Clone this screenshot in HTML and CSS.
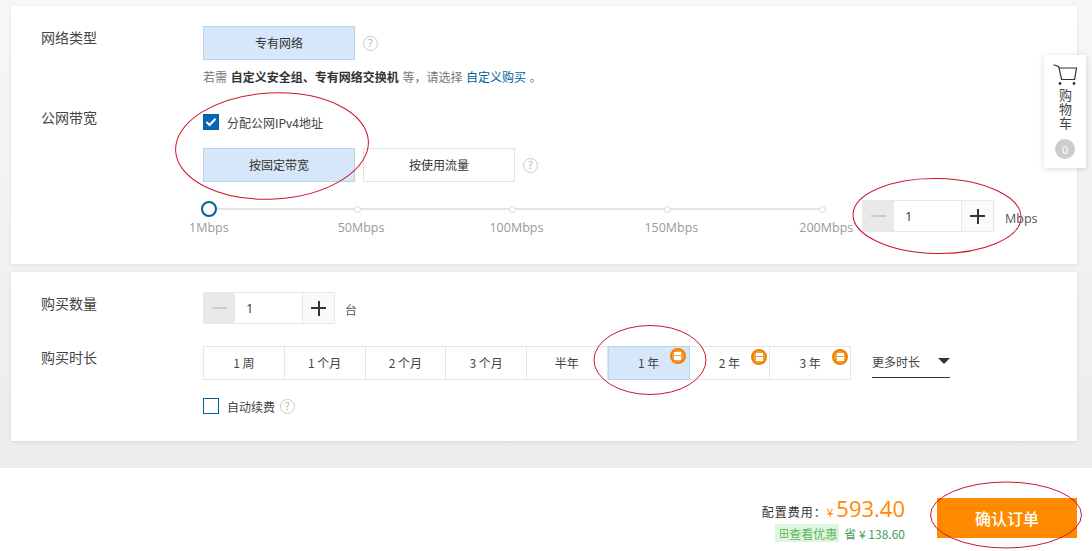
FILE: index.html
```html
<!DOCTYPE html>
<html lang="zh-CN">
<head>
    <meta charset="UTF-8">
    <meta name="viewport" content="width=device-width, initial-scale=1.0">
    <title>确认订单</title>
    <link rel="stylesheet" href="styles.css">
</head>
<body>
    <div class="page">
        <main class="content">
            <section class="panel panel-network">
                <div class="row">
                    <div class="row-label">网络类型</div>
                    <div class="row-body">
                        <div class="inline">
                            <button class="option option-active">专有网络</button>
                            <span class="help">?</span>
                        </div>
                        <p class="hint">若需 <b>自定义安全组、专有网络交换机</b> 等，请选择 <a href="#">自定义购买</a> 。</p>
                    </div>
                </div>

                <div class="row row-bandwidth">
                    <div class="row-label">公网带宽</div>
                    <div class="row-body">
                        <label class="check check-ipv4">
                            <span class="box box-on">
                                <svg width="12" height="10" viewBox="0 0 12 10"><path d="M1.5 5 L4.6 8 L10.5 1.8" fill="none" stroke="#fff" stroke-width="2"/></svg>
                            </span>
                            分配公网IPv4地址
                        </label>
                        <div class="inline billing">
                            <button class="option option-active">按固定带宽</button>
                            <button class="option">按使用流量</button>
                            <span class="help">?</span>
                        </div>
                        <div class="bandwidth">
                            <div class="slider">
                                <div class="track">
                                    <span class="knob"></span>
                                    <span class="node node-50"></span>
                                    <span class="node node-rest"></span>
                                    <span class="node node-rest"></span>
                                    <span class="node node-rest"></span>
                                </div>
                                <div class="scale">
                                    <span>1Mbps</span>
                                    <span>50Mbps</span>
                                    <span>100Mbps</span>
                                    <span>150Mbps</span>
                                    <span>200Mbps</span>
                                </div>
                            </div>
                            <div class="stepper">
                                <span class="step step-off"><i class="minus"></i></span>
                                <span class="step-value">1</span>
                                <span class="step"><i class="plus"></i></span>
                            </div>
                            <span class="unit unit-mbps">Mbps</span>
                        </div>
                    </div>
                </div>
            </section>

            <section class="panel panel-buy">
                <div class="row">
                    <div class="row-label">购买数量</div>
                    <div class="row-body inline">
                        <div class="stepper">
                            <span class="step step-off"><i class="minus"></i></span>
                            <span class="step-value">1</span>
                            <span class="step"><i class="plus"></i></span>
                        </div>
                        <span class="unit unit-tai">台</span>
                    </div>
                </div>

                <div class="row row-period">
                    <div class="row-label">购买时长</div>
                    <div class="row-body">
                        <div class="inline">
                            <div class="periods">
                                <span class="period">1 周</span>
                                <span class="period">1 个月</span>
                                <span class="period">2 个月</span>
                                <span class="period">3 个月</span>
                                <span class="period">半年</span>
                                <span class="period period-active">1 年<i class="deal"></i></span>
                                <span class="period">2 年<i class="deal"></i></span>
                                <span class="period">3 年<i class="deal"></i></span>
                            </div>
                            <div class="more">更多时长<i class="caret"></i></div>
                        </div>
                        <label class="check check-renew">
                            <span class="box"></span>
                            自动续费
                            <span class="help">?</span>
                        </label>
                    </div>
                </div>
            </section>
        </main>

        <footer class="footer">
            <div class="cost">
                <div class="cost-line"><span class="cost-label">配置费用：</span><span class="yen">¥</span><span class="price">593.40</span></div>
                <div class="save-line">
                    <span class="deal-tag">
                        <svg width="10" height="11" viewBox="0 0 10 11"><path d="M1.5 1.5 H8.5 V9.5 H1.5 Z M1.5 5.5 H8.5 M5 1.5 V9.5" fill="none" stroke="#6cc06c"/></svg>查看优惠
                    </span>
                    <span class="save">省 ¥ 138.60</span>
                </div>
            </div>
            <button class="confirm">确认订单</button>
        </footer>

        <aside class="cart">
            <svg class="cart-icon" width="25" height="22" viewBox="0 0 25 22">
                <path d="M0.5 0.8 L5.6 2.4 L8.6 15.5 H21.6 L23.5 4 H6" fill="none" stroke="#333" stroke-width="1.2"/>
                <circle cx="7" cy="19.5" r="1.4" fill="#333"/>
                <circle cx="21" cy="19.5" r="1.4" fill="#333"/>
            </svg>
            <span class="cart-text">购物车</span>
            <span class="cart-count">0</span>
        </aside>

        <!-- red hand-drawn marks on top of the screenshot -->
        <svg class="marks" width="1092" height="551" viewBox="0 0 1092 551">
            <ellipse cx="272" cy="146" rx="96.5" ry="53" transform="rotate(-3 272 146)"/>
            <ellipse cx="937" cy="216" rx="84" ry="37.5" transform="rotate(1 937 216)"/>
            <ellipse cx="650" cy="360" rx="56" ry="34.5"/>
            <ellipse cx="1006" cy="515" rx="75.5" ry="33"/>
        </svg>
    </div>
</body>
</html>
```

FILE: styles.css
```css
* {
    box-sizing: border-box;
}

body {
    margin: 0;
    background-color: #f5f5f5;
    color: #333;
    font-family: "Noto Sans CJK SC", "Open Sans", sans-serif;
    font-size: 12px;
}

.page {
    position: relative;
    width: 1092px;
    height: 551px;
    overflow: hidden;
}

.content {
    height: 468px;
    padding: 6px 15px 0 11px;
    background: linear-gradient(#f7f7f7, #ececec);
}

.panel {
    background-color: #fff;
    padding: 20px 0 0 30px;
    box-shadow: 0 1px 4px rgba(0, 0, 0, 0.08);
}

.panel-network {
    height: 258px;
}

.panel-buy {
    height: 169px;
    margin-top: 8px;
}

.row {
    display: grid;
    grid-template-columns: 162px 1fr;
}

.row-label {
    font-size: 14px;
    line-height: 22px;
    color: #444;
}

.row-bandwidth {
    margin-top: 20px;
}

.row-period {
    margin-top: 22px;
}

.inline {
    display: flex;
    align-items: center;
}

/* buttons */
.option {
    width: 152px;
    height: 34px;
    padding: 0 0 2px;
    border: 1px solid #e3e3e3;
    background-color: #fff;
    color: #333;
    font: inherit;
}

.option + .option {
    margin-left: 8px;
}

.option-active {
    background-color: #d5e7f8;
    border-color: #b9d3e8;
}

.help {
    display: inline-block;
    width: 15px;
    height: 15px;
    margin-left: 8px;
    border: 1px solid #ccc;
    border-radius: 50%;
    color: #aaa;
    font-family: "Open Sans", sans-serif;
    font-size: 10px;
    line-height: 13px;
    text-align: center;
}

.hint {
    margin: 8px 0 0;
    line-height: 18px;
    color: #777;
    word-spacing: 1px;
}

.hint b {
    color: #333;
}

.hint a {
    color: #00609e;
    text-decoration: none;
}

/* checkboxes */
.check {
    display: flex;
    align-items: center;
    color: #444;
}

.box {
    display: flex;
    align-items: center;
    justify-content: center;
    width: 16px;
    height: 16px;
    margin-right: 8px;
    border: 1px solid #00609e;
}

.box-on {
    background-color: #0a66b7;
}

.check-ipv4 {
    height: 24px;
    margin-top: 4px;
}

.check-renew {
    height: 16px;
    margin-top: 18px;
}

.check-renew .help {
    margin-left: 5px;
}

.billing {
    margin-top: 14px;
}

/* slider */
.bandwidth {
    display: flex;
    align-items: flex-start;
    margin: 18px 0 0 -14px;
}

.slider {
    width: 665px;
}

.track {
    display: flex;
    align-items: center;
    width: 625px;
    height: 18px;
    margin-left: 12px;
    background: linear-gradient(#e4e4e4, #e4e4e4) no-repeat left center / 100% 2px;
}

.knob {
    width: 16px;
    height: 16px;
    border: 2px solid #00609e;
    border-radius: 50%;
    background-color: #fff;
}

.node {
    width: 7px;
    height: 7px;
    border: 1px solid #d8d8d8;
    border-radius: 50%;
    background-color: #fff;
}

.node-50 {
    margin-left: 137px;
}

.node-rest {
    margin-left: 148px;
}

.scale {
    display: flex;
    margin-top: 1px;
    color: #999;
    font-family: "Open Sans", sans-serif;
    font-size: 12.5px;
    line-height: 18px;
}

.scale span + span {
    margin-left: 109px;
}

.scale span:nth-child(3) {
    margin-left: 105px;
}

.scale span:nth-child(n+4) {
    margin-left: 101px;
}

/* stepper */
.stepper {
    display: flex;
    width: 132px;
    height: 32px;
    margin-left: 8px;
    border: 1px solid #e8e8e8;
}

.row-body > .stepper {
    margin-left: 0;
}

.step {
    position: relative;
    width: 31px;
    background-color: #fafafa;
}

.step-off {
    background-color: #e9e9e9;
}

.step-value {
    flex: 1;
    padding-left: 11px;
    border-right: 1px solid #e8e8e8;
    font-family: "Open Sans", sans-serif;
    font-size: 13px;
    line-height: 30px;
}

.minus,
.plus {
    position: absolute;
    top: 14px;
    left: 8px;
    width: 15px;
    height: 2px;
    background-color: #ccc;
}

.plus {
    background-color: #333;
}

.plus::after {
    content: "";
    position: absolute;
    top: -6.5px;
    left: 6.5px;
    width: 2px;
    height: 15px;
    background-color: #333;
}

.unit-mbps {
    margin: 10px 0 0 11px;
    color: #555;
    font-family: "Open Sans", sans-serif;
    font-size: 12.5px;
    line-height: 18px;
}

.unit-tai {
    margin: 2px 0 0 10px;
    color: #555;
}

/* period picker */
.periods {
    display: flex;
    border: 1px solid #e5e5e5;
    width: 648px;
    height: 34px;
}

.period {
    position: relative;
    flex: 1;
    border-right: 1px solid #e5e5e5;
    line-height: 32px;
    text-align: center;
    color: #444;
}

.period:last-child {
    border-right: 0;
}

.period-active {
    margin: -1px 0;
    height: 34px;
    background-color: #d5e7f8;
    border: 1px solid #b9d3e8;
}

.deal {
    position: absolute;
    top: 2px;
    right: 2px;
    display: flex;
    align-items: center;
    justify-content: center;
    width: 16px;
    height: 16px;
    border: 2px solid #ee8200;
    border-radius: 50%;
    background-color: #f7a13a;
}

.deal::after {
    content: "";
    width: 7px;
    height: 8px;
    background: linear-gradient(#fff 0 3px, #f7a13a 3px 4px, #fff 4px);
}

.period-active .deal {
    top: 1px;
    right: 3px;
}

.more {
    display: flex;
    align-items: center;
    justify-content: space-between;
    width: 78px;
    height: 30px;
    margin-left: 21px;
    padding-bottom: 3px;
    border-bottom: 1px solid #333;
    color: #444;
}

.caret {
    width: 0;
    height: 0;
    border-style: solid;
    border-width: 6px 6px 0;
    border-color: #333 transparent transparent;
}

/* footer */
.footer {
    display: flex;
    justify-content: flex-end;
    height: 83px;
    padding: 30px 15px 0 0;
    background-color: #fff;
}

.cost {
    margin-top: -5px;
    text-align: right;
}

.cost-line {
    height: 31px;
    line-height: 30px;
}

.cost-label {
    letter-spacing: 1px;
}

.yen {
    margin-right: 3px;
    color: #ff8a00;
}

.price {
    color: #ff8a00;
    font-family: "Open Sans", sans-serif;
    font-size: 22px;
}

.save-line {
    display: flex;
    align-items: center;
    justify-content: flex-end;
    height: 18px;
}

.deal-tag {
    display: flex;
    align-items: center;
    height: 18px;
    padding: 0 2px 0 4px;
    background-color: #e0f5e0;
    color: #5cb85c;
}

.save {
    margin-left: 5px;
    color: #3f9e5a;
}

.confirm {
    width: 140px;
    height: 40px;
    margin-left: 32px;
    border: 0;
    background-color: #ff8a00;
    color: #fff;
    font: inherit;
    font-size: 16px;
    font-weight: 500;
}

/* floating cart */
.cart {
    position: absolute;
    top: 55px;
    left: 1044px;
    display: flex;
    flex-direction: column;
    align-items: center;
    width: 42px;
    height: 113px;
    padding-top: 9px;
    background-color: #fff;
    box-shadow: 0 1px 6px rgba(0, 0, 0, 0.15);
}

.cart-text {
    margin-top: 3px;
    writing-mode: vertical-rl;
    text-orientation: upright;
    font-size: 13px;
    letter-spacing: 1px;
    line-height: 14px;
    color: #444;
}

.cart-count {
    width: 20px;
    height: 20px;
    margin-top: 8px;
    border-radius: 50%;
    background-color: #ccc;
    color: #fff;
    font-size: 11px;
    line-height: 20px;
    text-align: center;
}

.marks {
    position: absolute;
    top: 0;
    left: 0;
    pointer-events: none;
}

.marks ellipse {
    fill: none;
    stroke: #d0142c;
    stroke-width: 1;
}
```
